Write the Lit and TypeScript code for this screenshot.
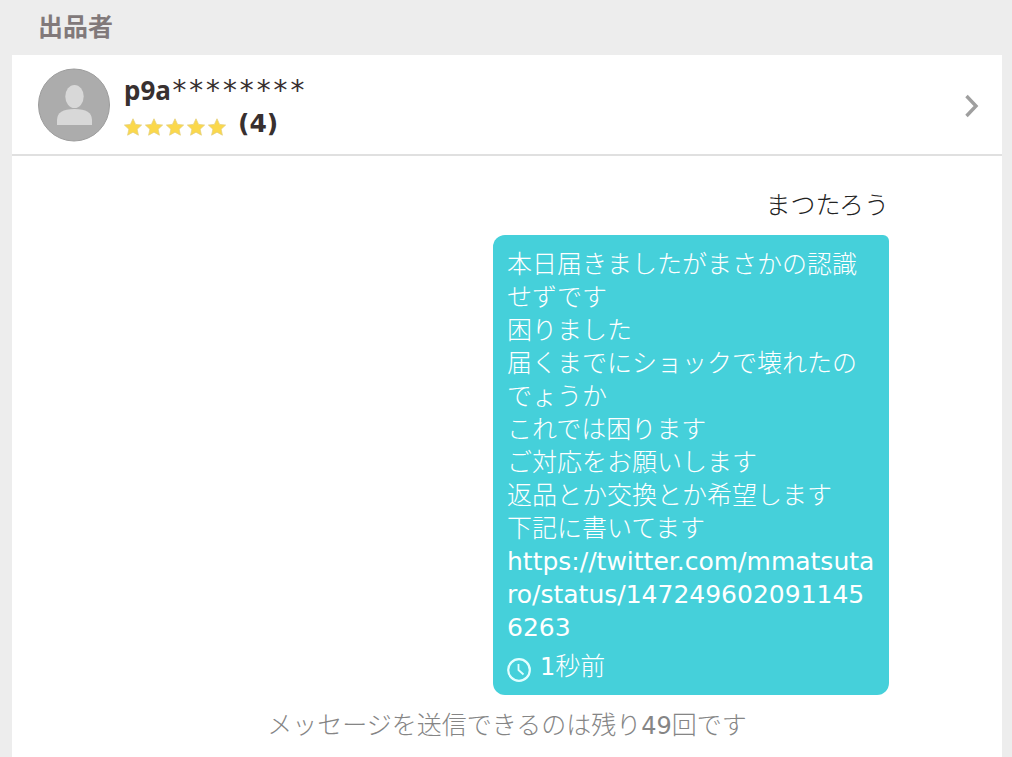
import { LitElement, html, css } from "lit";
import { customElement, property } from "lit/decorators.js";

const STAR = "M12 1l3.400 7.500 8.100.9-6 5.500 1.700 8L12 18.900l-7.200 4 1.700-8L.5 9.400l8.100-.9z";

@customElement("seller-card")
class SellerCard extends LitElement {
  @property() name = "";
  @property() mask = "";
  @property({ type: Number }) rating = 0;
  @property({ type: Number }) reviews = 0;

  static styles = css`
    :host { display: block; }
    .card {
      display: flex;
      align-items: center;
      gap: 14px;
      padding: 13px 20px 12px 26px;
      border-bottom: 2px solid #e0e0e0;
      background: #fff;
      color: #38302f;
      text-decoration: none;
    }
    .avatar { flex: none; width: 72px; height: 74px; }
    .info { flex: 1; min-width: 0; padding-top: 4px; font-weight: 700; line-height: 33px; }
    .name { display: flex; height: 33px; font-family: "Noto Sans", sans-serif; font-size: 26px; }
    .mask { font-family: "DejaVu Sans Mono", monospace; font-weight: 400; font-size: 28px; }
    .rating { display: flex; align-items: center; height: 33px; font-size: 25px; }
    .stars { display: flex; gap: 3px; padding-top: 6px; margin-right: 12px; }
    .star { width: 18px; height: 18px; }
    .arrow { flex: none; width: 20px; height: 28px; }
  `;

  render() {
    return html`
      <a class="card" href="#seller">
        <svg class="avatar" viewBox="0 0 72 74" aria-hidden="true">
          <ellipse cx="36" cy="37" rx="35.500" ry="36" fill="#acacac" stroke="#9c9c9c" />
          <ellipse cx="36.500" cy="28.500" rx="9.200" ry="11.500" fill="#d8d8d8" />
          <path d="M19 57V52Q19 41 36.500 41T54 52V57Z" fill="#d8d8d8" />
        </svg>
        <div class="info">
          <div class="name"><span>${this.name}</span><span class="mask">${this.mask}</span></div>
          <div class="rating">
            <div class="stars" role="img" aria-label="${this.rating}">
              ${Array.from({ length: this.rating }, () => html`
                <svg class="star" viewBox="0 0 24 24"><path d=${STAR} fill="#fbd84b" stroke="#e3cf7c" stroke-width="1" /></svg>
              `)}
            </div>
            <span>(${this.reviews})</span>
          </div>
        </div>
        <svg class="arrow" viewBox="0 0 20 28" fill="none" aria-hidden="true">
          <path d="M4.500 5L14 15L4.500 25" stroke="#9f9f9f" stroke-width="3.400" />
        </svg>
      </a>
    `;
  }
}

@customElement("message-bubble")
class MessageBubble extends LitElement {
  @property() author = "";
  @property({ attribute: false }) lines: string[] = [];
  @property() link = "";
  @property() amount = "";
  @property() unit = "";

  static styles = css`
    :host { display: block; width: 40%; }
    .author { text-align: right; color: #222; line-height: 33px; margin: 0 0 13px; }
    .bubble {
      padding: 13px 14px 11px;
      border-radius: 12px 6px 12px 12px;
      background: #45d0da;
      color: #fff;
    }
    .text { margin: 0; }
    .link { display: block; color: #fff; text-decoration: none; font-weight: 400; word-break: break-all; }
    .time { display: flex; align-items: center; margin-top: 6px; }
    .clock { width: 24px; height: 24px; margin: 6px 9px 0 0; }
    .latin { font-size: 24px; font-weight: 400; }
  `;

  render() {
    return html`
      <p class="author">${this.author}</p>
      <div class="bubble">
        ${this.lines.map((line) => html`<p class="text">${line}</p>`)}
        <a class="link" href=${this.link}>${this.link}</a>
        <div class="time">
          <svg class="clock" viewBox="0 0 24 24" fill="none" stroke="#e2ffff" aria-hidden="true">
            <circle cx="12" cy="12" r="10.800" stroke-width="2.200" />
            <path d="M11.500 6V12L16.500 16.500" stroke-width="1.800" />
          </svg>
          <span><span class="latin">${this.amount}</span>${this.unit}</span>
        </div>
      </div>
    `;
  }
}

@customElement("app-root")
class AppRoot extends LitElement {
  static styles = css`
    :host {
      display: flex;
      flex-direction: column;
      box-sizing: border-box;
      min-height: 100vh;
      padding: 0 10px 0 12px;
      background: #ededed;
      font-family: "DejaVu Sans", "Noto Sans CJK JP", sans-serif;
      font-size: 25px;
      line-height: 33px;
    }
    .heading {
      margin: 0;
      padding: 11px 26px;
      color: #81797a;
      font-size: 25px;
      font-weight: 700;
      line-height: 33px;
    }
    .thread { flex: 1; display: flex; flex-direction: column; background: #fff; padding-top: 33px; }
    .own { align-self: flex-end; margin-right: 113px; font-weight: 300; }
    .notice { margin: 0; padding: 14px 0 15px; text-align: center; color: #858585; font-weight: 300; }
    .latin { font-size: 24px; font-weight: 400; }
  `;

  private lines = [
    "本日届きましたがまさかの認識せずです",
    "困りました",
    "届くまでにショックで壊れたのでょうか",
    "これでは困ります",
    "ご対応をお願いします",
    "返品とか交換とか希望します",
    "下記に書いてます",
  ];

  render() {
    return html`
      <h2 class="heading">出品者</h2>
      <seller-card name="p9a" mask="********" rating="5" reviews="4"></seller-card>
      <main class="thread">
        <message-bubble
          class="own"
          author="まつたろう"
          .lines=${this.lines}
          link="https://twitter.com/mmatsutaro/status/1472496020911456263"
          amount="1"
          unit="秒前"
        ></message-bubble>
        <p class="notice">メッセージを送信できるのは残り<span class="latin">49</span>回です</p>
      </main>
    `;
  }
}
